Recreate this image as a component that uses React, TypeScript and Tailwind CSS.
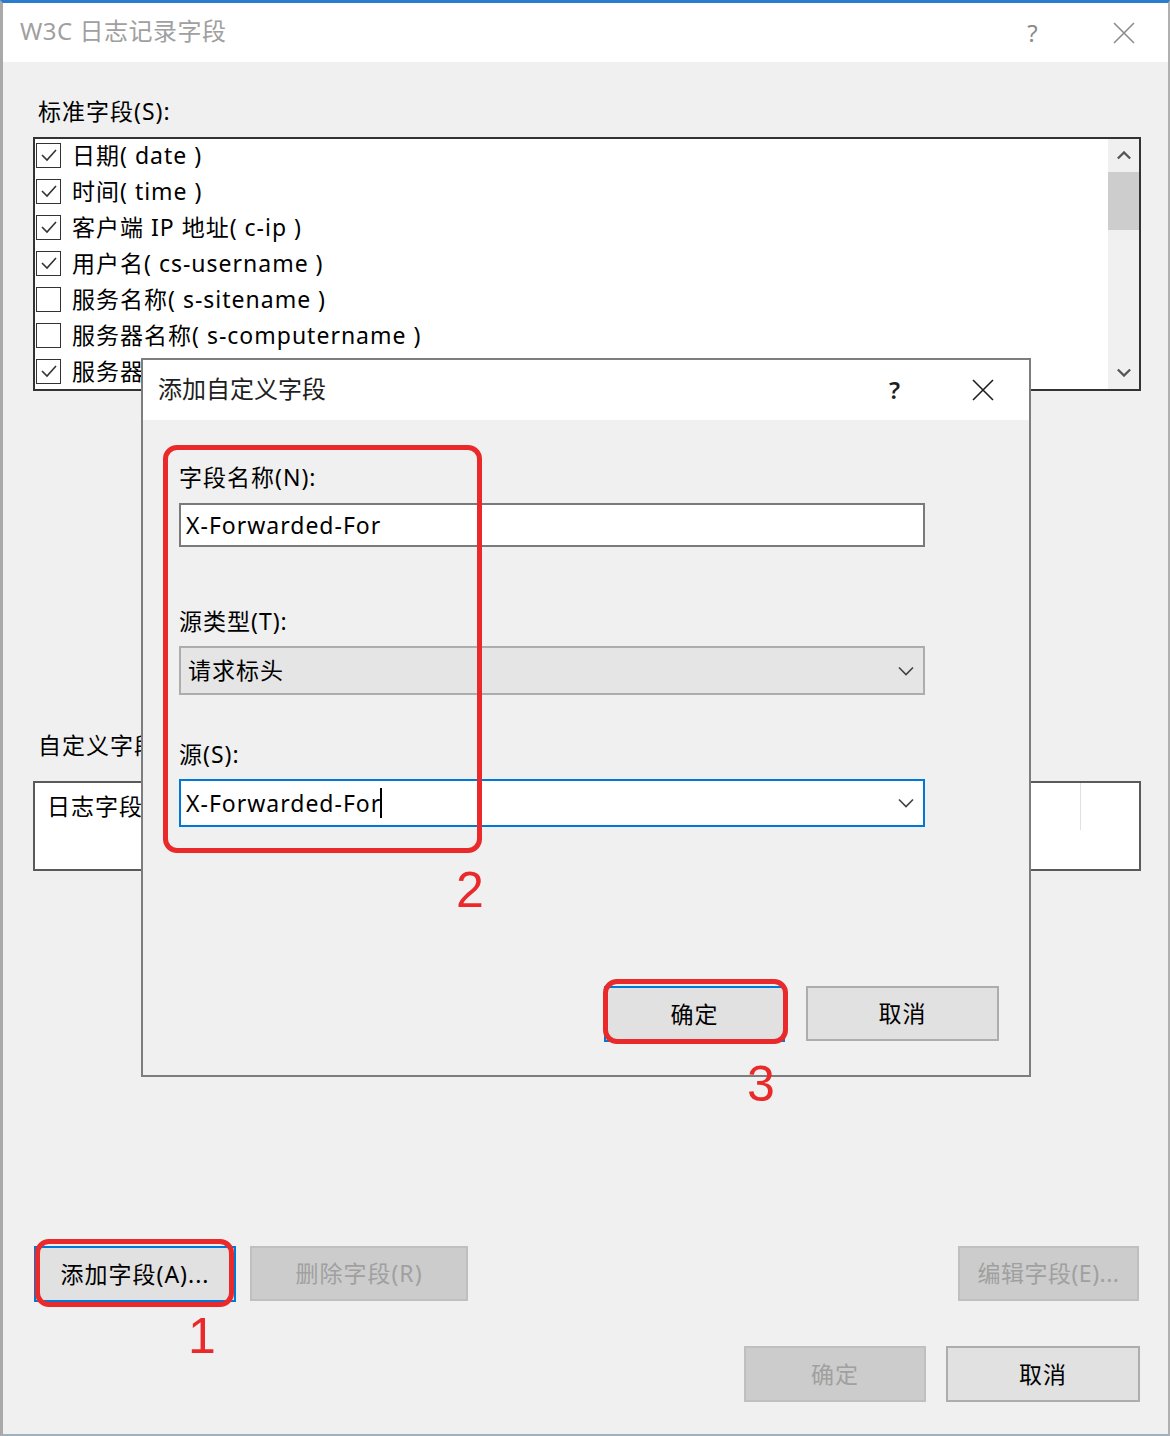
import React from "react";

const FONT = { fontFamily: '"Noto Sans", "Noto Sans CJK SC", sans-serif' } as const;

function XIcon({ color }: { color: string }) {
  return (
    <svg width="24" height="24" viewBox="0 0 24 24">
      <path d="M2 2 L22 22 M22 2 L2 22" stroke={color} strokeWidth="1.6" fill="none" />
    </svg>
  );
}

function Chevron({ up = false, color = "#404040", w = 16, sw = 1.6 }: { up?: boolean; color?: string; w?: number; sw?: number }) {
  return (
    <svg width={w} height={w / 2 + 2} viewBox="0 0 16 10">
      <path d={up ? "M1 8.5 L8 1.5 L15 8.5" : "M1 1.5 L8 8.5 L15 1.5"} stroke={color} strokeWidth={sw} fill="none" />
    </svg>
  );
}

function Check({ checked }: { checked: boolean }) {
  return (
    <div className="flex h-[25px] w-[25px] shrink-0 items-center justify-center border-[1.5px] border-[#333333] bg-white">
      {checked && (
        <svg width="20" height="20" viewBox="0 0 20 20">
          <path d="M3 10 L8 15 L17 5" stroke="#333333" strokeWidth="1.6" fill="none" />
        </svg>
      )}
    </div>
  );
}

const items: [boolean, string][] = [
  [true, "日期( date )"],
  [true, "时间( time )"],
  [true, "客户端 IP 地址( c-ip )"],
  [true, "用户名( cs-username )"],
  [false, "服务名称( s-sitename )"],
  [false, "服务器名称( s-computername )"],
  [true, "服务器"],
];

export default function App() {
  return (
    <div className="relative h-[1436px] w-[1170px] overflow-hidden text-[23px] tracking-[1px] text-black" style={FONT}>
      <div className="flex h-[1436px] w-[1170px] flex-col border-t-[3px] border-l-[3px] border-r-2 border-b-2 border-t-[#2b7bcf] border-l-[#a9a9a9] border-r-[#b0b0b0] border-b-[#9fb0bf] bg-[#f0f0f0]">
        {/* title bar */}
        <div className="flex h-[59px] shrink-0 items-center bg-white pl-[17px] pr-[24px]">
          <div className="-mt-[3px] flex-1 text-[24px] tracking-[0.5px] text-[#a0a0a0]">W3C 日志记录字段</div>
          <div className="flex w-[40px] justify-center text-[24px] text-[#8c8c8c]">?</div>
          <div className="ml-[51px] flex w-[40px] justify-center">
            <XIcon color="#8c8c8c" />
          </div>
        </div>

        {/* body */}
        <div className="flex flex-col pl-[30px]">
          <div className="ml-[5px] mt-[34px] h-[30px] leading-[30px]">标准字段(S):</div>
          <div className="mt-[11px] flex h-[254px] w-[1108px] border-2 border-[#333333] bg-white">
            <div className="-mt-[2px] flex flex-1 flex-col overflow-hidden">
              {items.map(([c, t], i) => (
                <div key={i} className="flex h-[36px] shrink-0 items-center pl-[1px]">
                  <Check checked={c} />
                  <span className="ml-[11px] whitespace-nowrap leading-none">{t}</span>
                </div>
              ))}
            </div>
            <div className="flex w-[31px] flex-col items-center bg-[#f0f0f0]">
              <div className="flex h-[33px] items-center justify-center">
                <Chevron up color="#555555" w={14} sw={2.6} />
              </div>
              <div className="h-[58px] w-full bg-[#cdcdcd]" />
              <div className="flex-1" />
              <div className="flex h-[33px] items-center justify-center">
                <Chevron color="#555555" w={14} sw={2.6} />
              </div>
            </div>
          </div>

          <div className="ml-[5px] mt-[339px] h-[30px] leading-[30px]">自定义字段(C):</div>
          <div className="mt-[21px] h-[90px] w-[1108px] border-2 border-[#5a5a5a] bg-white">
            <div className="flex h-[47px] items-center">
              <div className="w-[400px] pl-[12px]">日志字段</div>
              <div className="w-[300px] pl-[13px]">源类型</div>
              <div className="h-[47px] w-[346px] border-r border-[#e0e0e0] pl-[13px] leading-[47px]">源</div>
            </div>
          </div>

          {/* buttons row 1 */}
          <div className="mt-[375px] flex items-start pr-[29px]">
            <button className="ml-[1px] h-[56px] w-[202px] border-2 border-[#0078d7] bg-[#e1e1e1] text-[23px] tracking-[1px]">添加字段(A)...</button>
            <button className="ml-[14px] h-[55px] w-[218px] border-2 border-[#bfbfbf] bg-[#cccccc] text-[23px] tracking-[1px] text-[#a0a0a0]">删除字段(R)</button>
            <div className="flex-1" />
            <button className="h-[55px] w-[181px] border-2 border-[#bfbfbf] bg-[#cccccc] text-[23px] tracking-[0.5px] text-[#a0a0a0]">编辑字段(E)...</button>
          </div>
          <div className="mt-[44px] flex justify-end pr-[28px]">
            <button className="h-[56px] w-[182px] border-2 border-[#bfbfbf] bg-[#cccccc] text-[23px] tracking-[1px] text-[#a0a0a0]">确定</button>
            <button className="ml-[20px] h-[56px] w-[194px] border-2 border-[#adadad] bg-[#e1e1e1] text-[23px] tracking-[1px]">取消</button>
          </div>
        </div>
      </div>

      {/* inner dialog */}
      <div className="absolute left-[141px] top-[358px] flex h-[719px] w-[890px] flex-col border-2 border-[#7d7d7d] bg-[#f0f0f0]">
        <div className="flex h-[60px] shrink-0 items-center bg-white pl-[15px] pr-[26px]">
          <div className="-mt-[2px] flex-1 text-[24px] tracking-normal text-[#1e1e1e]">添加自定义字段</div>
          <div className="flex w-[40px] justify-center text-[24px] font-semibold text-[#1e1e1e]">?</div>
          <div className="ml-[48px] flex w-[40px] justify-center">
            <XIcon color="#1e1e1e" />
          </div>
        </div>
        <div className="flex flex-col pl-[36px]">
          <div className="mt-[42px] h-[30px] leading-[30px]">字段名称(N):</div>
          <div className="mt-[11px] flex h-[44px] w-[746px] items-center border-2 border-[#7a7a7a] bg-white pl-[5px]">X-Forwarded-For</div>

          <div className="mt-[59px] h-[30px] leading-[30px]">源类型(T):</div>
          <div className="mt-[10px] flex h-[49px] w-[746px] items-center border-2 border-[#adadad] bg-[#e5e5e5] pl-[7px] pr-[9px]">
            <span className="flex-1">请求标头</span>
            <Chevron color="#404040" w={16} sw={1.6} />
          </div>

          <div className="mt-[44px] h-[30px] leading-[30px]">源(S):</div>
          <div className="mt-[10px] flex h-[48px] w-[746px] items-center border-2 border-[#0078d7] bg-white pl-[5px] pr-[9px]">
            <span>X-Forwarded-For</span>
            <span className="-ml-[1px] h-[30px] w-[2px] bg-black" />
            <span className="flex-1" />
            <Chevron color="#404040" w={16} sw={1.6} />
          </div>

          <div className="mt-[159px] flex justify-end pr-[30px]">
            <button className="h-[56px] w-[181px] border-2 border-[#0078d7] bg-[#e1e1e1] text-[23px] tracking-[1px]">确定</button>
            <button className="ml-[21px] h-[55px] w-[193px] border-2 border-[#adadad] bg-[#e1e1e1] text-[23px] tracking-[1px]">取消</button>
          </div>
        </div>
      </div>

      {/* annotations */}
      <div className="absolute left-[163px] top-[445px] h-[408px] w-[319px] rounded-[14px] border-[5px] border-[#ea2a2a]" />
      <div className="absolute left-[603px] top-[979px] h-[65px] w-[185px] rounded-[14px] border-[5px] border-[#ea2a2a]" />
      <div className="absolute left-[35px] top-[1239px] h-[68px] w-[199px] rounded-[14px] border-[5px] border-[#ea2a2a]" />
      <div className="absolute left-[456px] top-[865px] text-[50px] leading-none tracking-normal text-[#ea2a2a]" style={{ fontFamily: '"Liberation Sans", Arial, sans-serif' }}>2</div>
      <div className="absolute left-[747px] top-[1059px] text-[50px] leading-none tracking-normal text-[#ea2a2a]" style={{ fontFamily: '"Liberation Sans", Arial, sans-serif' }}>3</div>
      <div className="absolute left-[188px] top-[1311px] text-[50px] leading-none tracking-normal text-[#ea2a2a]" style={{ fontFamily: '"Liberation Sans", Arial, sans-serif' }}>1</div>
    </div>
  );
}
